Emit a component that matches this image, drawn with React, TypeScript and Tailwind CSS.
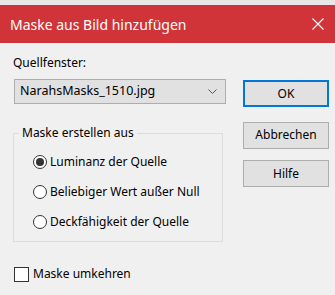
import React from 'react';

const font = { fontFamily: '"Noto Sans", "Open Sans", sans-serif' };

const Radio = ({ checked, label }: { checked?: boolean; label: string }) => (
  <div className="flex items-center h-[30px]">
    <span className="w-[14px] h-[14px] rounded-full border border-[#333] bg-white flex items-center justify-center">
      {checked && <span className="w-[8px] h-[8px] rounded-full bg-[#333]"></span>}
    </span>
    <span className="ml-[3px] text-[12px] text-black">{label}</span>
  </div>
);

const Button = ({ label, primary }: { label: string; primary?: boolean }) => (
  <button
    className={
      primary
        ? 'w-[86px] h-[27px] bg-[#e1e1e1] border-2 border-[#0078d7] text-[12px] text-black'
        : 'w-[86px] h-[27px] bg-[#e1e1e1] border border-[#adadad] text-[12px] text-black'
    }
  >
    {label}
  </button>
);

export default function App() {
  return (
    <div className="w-[335px] h-[295px] bg-[#f0f0f0] overflow-hidden" style={font}>
      <div className="h-[5px] bg-[#e8e8e8]"></div>
      <div className="h-[38px] bg-[#d13438] flex items-center justify-between pl-[10px] pr-[10px]">
        <span className="text-[14px] text-white">Maske aus Bild hinzufügen</span>
        <svg width="12" height="12" viewBox="0 0 12 12" className="mr-[1px]">
          <path d="M0.5 0.5 L11.5 11.5 M11.5 0.5 L0.5 11.5" stroke="white" strokeWidth="1.1" />
        </svg>
      </div>
      <div className="flex">
        <div className="w-[230px] pl-[13px]">
          <div className="mt-[11px] text-[12px] leading-[18px] text-black">Quellfenster:</div>
          <div className="ml-[1px] mt-[7px] w-[212px] h-[25px] bg-[#e1e1e1] border border-[#adadad] flex items-center justify-between pl-[5px] pr-[8px]">
            <span className="text-[12.5px] text-black">NarahsMasks_1510.jpg</span>
            <svg width="9" height="5" viewBox="0 0 9 5">
              <path d="M0.5 0.5 L4.5 4.5 L8.5 0.5" stroke="#555" strokeWidth="1" fill="none" />
            </svg>
          </div>
          <fieldset className="mt-[21px] w-[210px] h-[117px] border border-[#dcdcdc]">
            <legend className="ml-[5px] px-[3px] text-[12px] leading-[16px] text-black">Maske erstellen aus</legend>
            <div className="pl-[19px] pt-[6px]">
              <Radio checked label="Luminanz der Quelle" />
              <Radio label="Beliebiger Wert außer Null" />
              <Radio label="Deckfähigkeit der Quelle" />
            </div>
          </fieldset>
          <div className="mt-[23px] ml-[1px] flex items-center">
            <span className="w-[15px] h-[15px] border border-[#333] bg-white"></span>
            <span className="ml-[4px] text-[12px] text-black">Maske umkehren</span>
          </div>
        </div>
        <div className="pl-[13px] pt-[37px] flex flex-col">
          <Button primary label="OK" />
          <div className="mt-[14px]">
            <Button label="Abbrechen" />
          </div>
          <div className="mt-[11px]">
            <Button label="Hilfe" />
          </div>
        </div>
      </div>
    </div>
  );
}
